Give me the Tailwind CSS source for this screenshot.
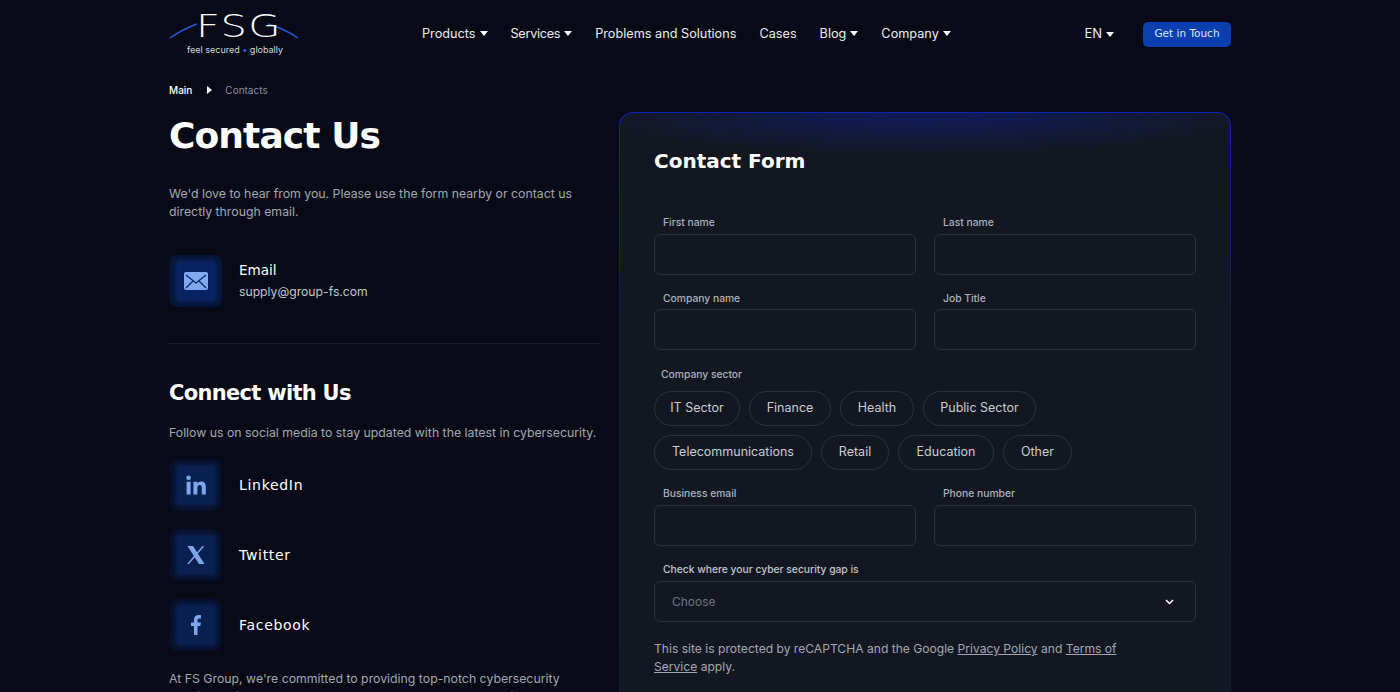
<!DOCTYPE html>
<html lang="en">
<head>
  <meta charset="UTF-8" />
  <title>Contact Us</title>
  <script src="https://cdn.jsdelivr.net/npm/@tailwindcss/browser@4"></script>
</head>
<body class="bg-[#080b17] font-['Inter','Open_Sans',sans-serif] text-white h-[692px] overflow-hidden">
  <div class="w-[1062px] ml-[169px]">
    <!-- header -->
    <header class="flex items-center h-[68px]">
      <div class="relative w-[253px] h-[68px] shrink-0">
        <svg class="absolute left-0 top-[20px]" width="130" height="22" viewBox="0 0 130 22" fill="none">
          <path d="M1 18 Q14 9 28 4" stroke="#1d5fe0" stroke-width="1.4"/>
          <path d="M99 4 Q114 8 129 18" stroke="#1d5fe0" stroke-width="1.4"/>
        </svg>
        <span class="absolute left-[27px] top-[7px] text-[32px] leading-[38px] font-extralight tracking-[1px] scale-x-[1.3] origin-left font-['DejaVu_Sans',sans-serif] whitespace-nowrap">FSG</span>
        <span class="absolute left-[18px] top-[43px] text-[9px] leading-[14px] text-[#d5d8de] whitespace-nowrap">feel secured <span class="text-[#2a64e0]">•</span> globally</span>
      </div>
      <nav class="flex items-center gap-[23px] text-[12.7px] font-normal text-[#e9ebef]">
        <a class="flex items-center gap-[4px]">Products
          <svg width="8" height="5" viewBox="0 0 8 5" fill="#fff"><path d="M0 0h8L4 5z"/></svg></a>
        <a class="flex items-center gap-[4px] tracking-[-0.3px]">Services
          <svg width="8" height="5" viewBox="0 0 8 5" fill="#fff"><path d="M0 0h8L4 5z"/></svg></a>
        <a>Problems and Solutions</a>
        <a>Cases</a>
        <a class="flex items-center gap-[4px]">Blog
          <svg width="8" height="5" viewBox="0 0 8 5" fill="#fff"><path d="M0 0h8L4 5z"/></svg></a>
        <a class="flex items-center gap-[4px]">Company
          <svg width="8" height="5" viewBox="0 0 8 5" fill="#fff"><path d="M0 0h8L4 5z"/></svg></a>
      </nav>
      <div class="ml-auto flex items-center gap-[4px] text-[13px] text-[#e9ebef] mr-[29px]">EN
        <svg width="8" height="5" viewBox="0 0 8 5" fill="#fff"><path d="M0 0h8L4 5z"/></svg></div>
      <button class="w-[88px] h-[25px] rounded-[5px] bg-[#0b3fae] text-[10.5px] font-medium font-['DejaVu_Sans',sans-serif] text-[#dfe6f5]">Get in Touch</button>
    </header>

    <div class="flex gap-[18px] items-start">
      <!-- left column -->
      <div class="w-[432px] shrink-0">
        <div class="flex items-center h-[16px] mt-[14px] text-[10px]">
          <span class="font-medium text-white">Main</span>
          <svg class="ml-[15px]" width="5" height="8" viewBox="0 0 5 8" fill="#fff"><path d="M0 0l5 4-5 4z"/></svg>
          <span class="ml-[13px] text-[#8b8f99]">Contacts</span>
        </div>
        <h1 class="font-['DejaVu_Sans',sans-serif] font-bold text-[36px] leading-[44px] mt-[16px] tracking-[-0.9px]">Contact Us</h1>
        <p class="text-[12.3px] leading-[17.5px] text-[#a3a7b0] mt-[27px]">We'd love to hear from you. Please use the form nearby or contact us directly through email.</p>

        <div class="flex items-center gap-[17px] mt-[35px]">
          <div class="w-[53px] h-[52px] rounded-[8px] bg-[#071537] flex items-center justify-center shrink-0">
            <div class="w-[38px] h-[38px] rounded-[3px] bg-[#0a2463] shadow-[0_0_4px_2px_#0a2463] flex items-center justify-center">
              <svg width="24" height="18" viewBox="0 0 24 18" fill="none">
                <rect width="24" height="18" rx="2" fill="#82a8f0"/>
                <path d="M2 3l10 8 10-8M2 16l7-7M22 16l-7-7" stroke="#0a2463" stroke-width="1.2"/>
              </svg>
            </div>
          </div>
          <div>
            <div class="font-['DejaVu_Sans',sans-serif] text-[13.5px] leading-[18px] font-medium">Email</div>
            <div class="text-[12.2px] leading-[18px] mt-[4px] text-[#c3c6cd]">supply@group-fs.com</div>
          </div>
        </div>

        <div class="h-px bg-[#1a1d28] mt-[36px]"></div>

        <h2 class="font-['DejaVu_Sans',sans-serif] font-bold text-[21px] leading-[28px] mt-[35px] tracking-[-0.7px]">Connect with Us</h2>
        <p class="text-[12.3px] leading-[18px] text-[#a3a7b0] mt-[17px] whitespace-nowrap">Follow us on social media to stay updated with the latest in cybersecurity.</p>

        <div class="flex flex-col gap-[18px] mt-[17px]">
          <div class="flex items-center gap-[17px]">
            <div class="w-[53px] h-[52px] rounded-[8px] bg-[#07112c] flex items-center justify-center">
              <div class="w-[38px] h-[38px] rounded-[3px] bg-[#0a2050] shadow-[0_0_4px_2px_#0a2050] flex items-center justify-center">
                <svg width="20" height="20" viewBox="0 0 20 20" fill="#7ea6ee">
                  <circle cx="2.600" cy="2.800" r="2.300"/>
                  <path d="M.6 6.800h4v12.700h-4zM7.400 6.800h3.800v1.800c.7-1.200 2.200-2.100 4-2.100 3.600 0 4.600 2.300 4.600 5.600v7.400h-4v-6.600c0-1.700-.4-3-2-3-1.700 0-2.400 1.300-2.400 3v6.600h-4z"/>
                </svg>
              </div>
            </div>
            <span class="font-['DejaVu_Sans',sans-serif] text-[14px] font-medium tracking-[0.7px]">LinkedIn</span>
          </div>
          <div class="flex items-center gap-[17px]">
            <div class="w-[53px] h-[52px] rounded-[8px] bg-[#07112c] flex items-center justify-center">
              <div class="w-[38px] h-[38px] rounded-[3px] bg-[#0a2050] shadow-[0_0_4px_2px_#0a2050] flex items-center justify-center">
                <svg width="18" height="18" viewBox="0 0 18 18" fill="none">
                  <path d="M.5 0h5.500L17.500 18H12z" fill="#7ea6ee"/>
                  <path d="M16.500 0L1 18" stroke="#7ea6ee" stroke-width="1.500"/>
                </svg>
              </div>
            </div>
            <span class="font-['DejaVu_Sans',sans-serif] text-[14px] font-medium tracking-[0.7px]">Twitter</span>
          </div>
          <div class="flex items-center gap-[17px]">
            <div class="w-[53px] h-[52px] rounded-[8px] bg-[#07112c] flex items-center justify-center">
              <div class="w-[38px] h-[38px] rounded-[3px] bg-[#0a2050] shadow-[0_0_4px_2px_#0a2050] flex items-center justify-center">
                <svg width="10" height="20" viewBox="0 0 10 20" fill="#7ea6ee">
                  <path d="M3 20V11H0V7.500h3V5c0-3.200 1.900-5 4.700-5 1 0 1.800.1 2.300.2v3.200H8.300C6.900 3.400 6.500 4.100 6.500 5.200v2.300h3.400L9.400 11H6.500v9z"/>
                </svg>
              </div>
            </div>
            <span class="font-['DejaVu_Sans',sans-serif] text-[14px] font-medium tracking-[0.7px]">Facebook</span>
          </div>
        </div>

        <p class="text-[12.3px] leading-[17.5px] text-[#a3a7b0] mt-[19px]">At FS Group, we're committed to providing top-notch cybersecurity solutions tailored to your needs. Whether you have a question or</p>
      </div>

      <!-- contact form card -->
      <div class="w-[612px] shrink-0 mt-[44px] h-[700px] p-px rounded-t-[14px] bg-[linear-gradient(180deg,#0a24b4_0%,#10204e_30%,#121a30_100%)]">
        <div class="h-full rounded-t-[13px] bg-[radial-gradient(ellipse_340px_42px_at_50%_0%,#111c55_15%,#131722_100%)] px-[34px] pt-[33px]">
          <h2 class="font-['DejaVu_Sans',sans-serif] font-bold text-[20px] leading-[30px]">Contact Form</h2>

          <div class="grid grid-cols-2 gap-x-[18px] gap-y-[16px] mt-[39px]">
            <div>
              <label class="block text-[10.3px] leading-[14px] font-medium text-[#aeb2bb] ml-[9px] mb-[5px]">First name</label>
              <div class="h-[41px] rounded-[6px] border border-[#2d313d]"></div>
            </div>
            <div>
              <label class="block text-[10.3px] leading-[14px] font-medium text-[#aeb2bb] ml-[9px] mb-[5px]">Last name</label>
              <div class="h-[41px] rounded-[6px] border border-[#2d313d]"></div>
            </div>
            <div>
              <label class="block text-[10.3px] leading-[14px] font-medium text-[#aeb2bb] ml-[9px] mb-[4px]">Company name</label>
              <div class="h-[41px] rounded-[6px] border border-[#2d313d]"></div>
            </div>
            <div>
              <label class="block text-[10.3px] leading-[14px] font-medium text-[#aeb2bb] ml-[9px] mb-[4px]">Job Title</label>
              <div class="h-[41px] rounded-[6px] border border-[#2d313d]"></div>
            </div>
          </div>

          <label class="block text-[10.3px] leading-[14px] font-medium text-[#aeb2bb] ml-[7px] mt-[17px]">Company sector</label>
          <div class="flex flex-col gap-[9px] mt-[10px] text-[12.5px] text-[#c9ccd3]">
            <div class="flex gap-[9px]">
              <span class="w-[86px] h-[35px] flex items-center justify-center rounded-full border border-[#2d313d]">IT Sector</span>
              <span class="w-[82px] h-[35px] flex items-center justify-center rounded-full border border-[#2d313d]">Finance</span>
              <span class="w-[74px] h-[35px] flex items-center justify-center rounded-full border border-[#2d313d]">Health</span>
              <span class="w-[113px] h-[35px] flex items-center justify-center rounded-full border border-[#2d313d]">Public Sector</span>
            </div>
            <div class="flex gap-[9px]">
              <span class="w-[158px] h-[35px] flex items-center justify-center rounded-full border border-[#2d313d]">Telecommunications</span>
              <span class="w-[68px] h-[35px] flex items-center justify-center rounded-full border border-[#2d313d]">Retail</span>
              <span class="w-[96px] h-[35px] flex items-center justify-center rounded-full border border-[#2d313d]">Education</span>
              <span class="w-[69px] h-[35px] flex items-center justify-center rounded-full border border-[#2d313d]">Other</span>
            </div>
          </div>

          <div class="grid grid-cols-2 gap-x-[18px] mt-[16px]">
            <div>
              <label class="block text-[10.3px] leading-[14px] font-medium text-[#aeb2bb] ml-[9px] mb-[5px]">Business email</label>
              <div class="h-[41px] rounded-[6px] border border-[#2d313d]"></div>
            </div>
            <div>
              <label class="block text-[10.3px] leading-[14px] font-medium text-[#aeb2bb] ml-[9px] mb-[5px]">Phone number</label>
              <div class="h-[41px] rounded-[6px] border border-[#2d313d]"></div>
            </div>
          </div>

          <label class="block text-[10.3px] leading-[14px] font-medium text-[#c3c6cd] ml-[9px] mt-[16px] mb-[5px]">Check where your cyber security gap is</label>
          <div class="h-[41px] rounded-[6px] border border-[#2d313d] flex items-center justify-between pl-[17px] pr-[21px] text-[12px] text-[#6f7480]">
            Choose
            <svg width="9" height="6" viewBox="0 0 9 6" fill="none"><path d="M1 1l3.500 3.500L8 1" stroke="#fff" stroke-width="1.500"/></svg>
          </div>

          <p class="text-[12.1px] leading-[17.5px] text-[#a3a7b0] mt-[18px] w-[470px]">This site is protected by reCAPTCHA and the Google <a class="underline">Privacy Policy</a> and <a class="underline">Terms of Service</a> apply.</p>
        </div>
      </div>
    </div>
  </div>
</body>
</html>
